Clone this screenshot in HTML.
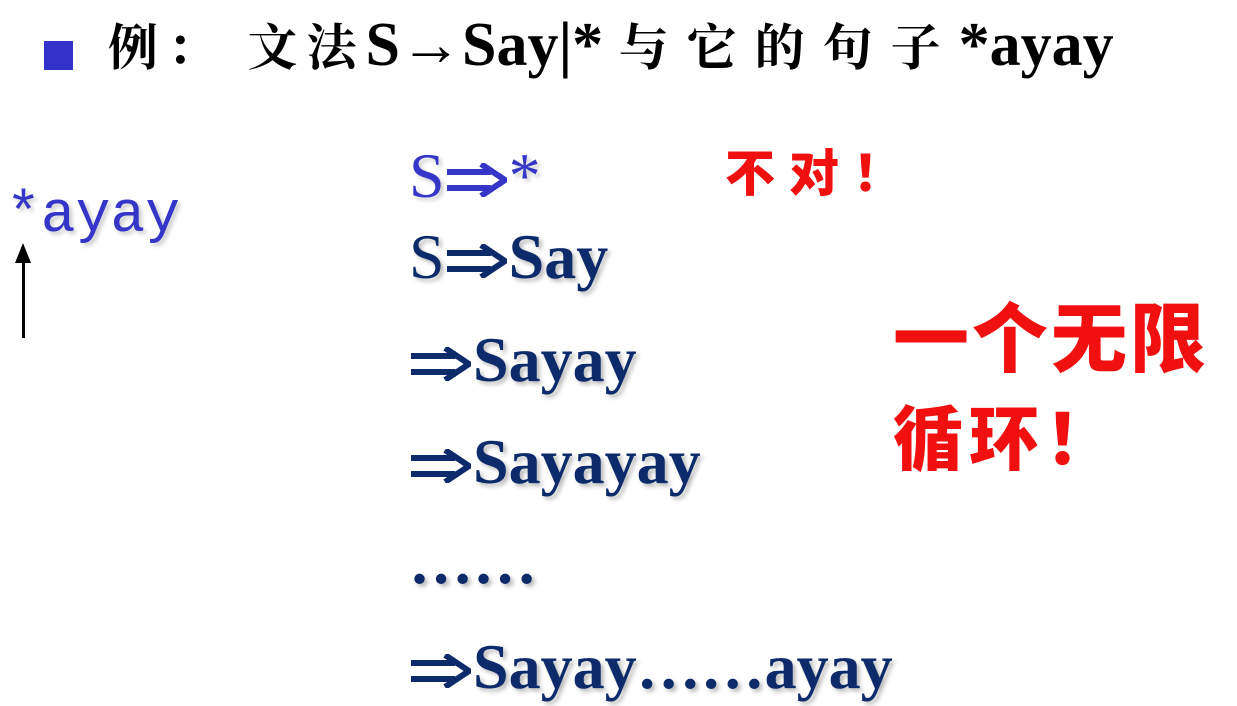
<!DOCTYPE html>
<html><head><meta charset="utf-8"><style>
body{margin:0;width:1237px;height:706px;background:#fff;position:relative;overflow:hidden;font-family:"Liberation Serif","Noto Serif CJK SC",serif}
.a{position:absolute;white-space:nowrap;line-height:1}
.n{color:#0d2a6b;font-weight:bold;font-size:64px;text-shadow:3px 3px 4px #bbb}
.s{font-weight:normal}
svg.ar{width:62px;height:34px;vertical-align:0px;margin-right:2px}
.r{color:#f01010;font-family:"Noto Sans CJK SC",sans-serif;font-weight:900}
.c{font-size:50px;letter-spacing:9px}
.c2{font-size:50px;letter-spacing:18px}
</style></head><body>
<svg width="0" height="0" style="position:absolute"><defs><symbol id="ar" viewBox="0 0 62 34"><path d="M2 9H46M2 25H46" stroke="currentColor" stroke-width="6"/><path d="M36 1L60 17L36 33" fill="none" stroke="currentColor" stroke-width="6" stroke-linejoin="miter"/></symbol></defs></svg>
<div class="a" style="left:44px;top:41px;width:29px;height:29px;background:#3333cc"></div>
<div class="a" style="left:108px;top:14px;font-size:62px;font-weight:bold;color:#000"><span class="c">例：&nbsp;文法</span>S→Say|*&nbsp;<span class="c2">与它的句子</span>*ayay</div>
<div class="a" style="left:6px;top:188px;font-size:58px;color:#3535c8;text-shadow:3px 3px 4px #ccc;font-family:'Liberation Mono','DejaVu Sans Mono',monospace">*ayay</div>
<div class="a" style="left:22px;top:258px;width:3px;height:80px;background:#000"></div>
<div class="a" style="left:15px;top:243px;width:0;height:0;border-left:8px solid transparent;border-right:8px solid transparent;border-bottom:20px solid #000"></div>
<div class="a" style="left:409px;top:144px;font-size:64px;color:#3535c8;text-shadow:3px 3px 4px #ccc">S<svg class="ar"><use href="#ar"/></svg>*</div>
<div class="a n" style="left:409px;top:225px"><span class="s">S</span><svg class="ar"><use href="#ar"/></svg>Say</div>
<div class="a n" style="left:409px;top:328px"><svg class="ar"><use href="#ar"/></svg>Sayay</div>
<div class="a n" style="left:409px;top:430px"><svg class="ar"><use href="#ar"/></svg>Sayayay</div>
<div class="a n" style="left:409px;top:530px">……</div>
<div class="a n" style="left:409px;top:635px"><svg class="ar"><use href="#ar"/></svg>Sayay……ayay</div>
<div class="a r" style="left:725px;top:145px;font-size:50px;letter-spacing:14px">不对！</div>
<div class="a r" style="left:893px;top:295px;font-size:76px;letter-spacing:3px">一个无限</div>
<div class="a r" style="left:893px;top:400px;font-size:70px;letter-spacing:6px">循环！</div>
</body></html>
